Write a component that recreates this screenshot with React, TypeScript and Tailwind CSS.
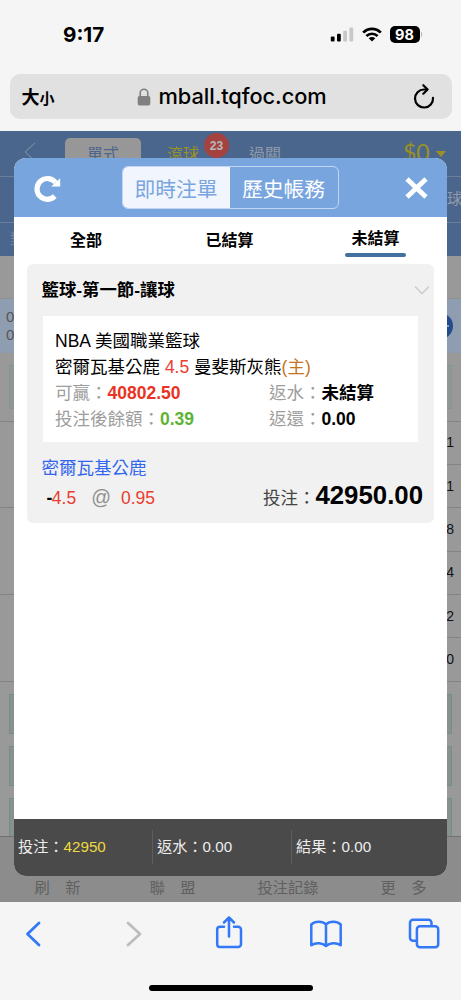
const records = [
  { value: "1" },
  { value: "1" },
  { value: "8" },
  { value: "4" },
  { value: "2" },
  { value: "0" },
];

function StatusBar() {
  return (
    <div className="flex h-[74px] items-start justify-between pt-[22px] pr-[39px] pl-[63px] font-['Inter']">
      <span className="text-[20.7px] leading-[25px] font-bold">9:17</span>
      <div className="flex h-[25px] items-center">
        <svg width="24" height="15" viewBox="0 0 24 15" className="mr-[8px]">
          <rect x="0.8" y="9.6" width="3.8" height="5" rx="1" fill="#000" />
          <rect x="7" y="6.8" width="3.8" height="7.8" rx="1" fill="#000" />
          <rect x="13.2" y="3.8" width="3.8" height="10.8" rx="1" fill="#c8c8c8" />
          <rect x="19.4" y="0.6" width="3.8" height="14" rx="1" fill="#c8c8c8" />
        </svg>
        <svg width="20" height="15" viewBox="0 0 20 15" fill="none" className="mr-[8px]">
          <path d="M1.2 5.6C6.2.6 13.8.6 18.8 5.6" stroke="#000" strokeWidth="2.7" />
          <path d="M4.4 9c3.2-3.1 8-3.1 11.2 0" stroke="#000" strokeWidth="2.6" />
          <path d="M6.7 11.3c1.9-1.7 4.7-1.7 6.6 0L10 14.6z" fill="#000" />
        </svg>
        <span className="flex h-[17px] w-[30px] items-center justify-center rounded-[5px] bg-black text-[14.5px] font-bold text-white">
          98
        </span>
        <span className="ml-[1px] h-[5px] w-[1.5px] rounded-r-full bg-[#b5b5b5]" />
      </div>
    </div>
  );
}

function AddressBar() {
  return (
    <div className="mx-[9.5px] flex h-[45px] items-center rounded-[10px] bg-[#e1e1e1] pr-[17px] pl-[12px]">
      <span className="w-[115px] font-['Noto_Sans_CJK_TC'] text-[18px] font-bold">
        大<span className="text-[15px]">小</span>
      </span>
      <svg width="14" height="18" viewBox="0 0 14 18" className="mr-[8px]" fill="none">
        <path d="M3.2 9V5a3.8 3.8 0 0 1 7.6 0v4" stroke="#808080" strokeWidth="1.6" />
        <rect x="0.7" y="8" width="12.6" height="9.6" rx="1.8" fill="#808080" />
      </svg>
      <span className="flex-1 font-['Inter'] text-[21.8px] font-medium tracking-[-0.05px]">mball.tqfoc.com</span>
      <svg width="22" height="26" viewBox="0 0 22 26" fill="none" stroke="#000" strokeWidth="2.2" strokeLinecap="round" strokeLinejoin="round" className="-mt-[2px]">
        <path d="M14 6.5H11A9 9 0 1 0 20 14.8" />
        <path d="M10.3 2.2 14.6 6.5l-4.3 4.2" />
      </svg>
    </div>
  );
}

function Backdrop() {
  return (
    <div className="flex h-full flex-col bg-[#999]">
      <div className="h-[125px] shrink-0 bg-[#4b668c]">
        <div className="flex h-[46px] border-b border-[#6a7f9c]">
          <svg width="12" height="20" viewBox="0 0 12 20" fill="none" className="mt-[11px] ml-[24px] shrink-0">
            <path d="M11 1 1 10l10 9" stroke="#8795a8" />
          </svg>
          <span className="mt-[7px] ml-[29px] h-[35px] w-[76px] shrink-0 rounded-[5px] bg-[#979797] text-center text-[16px] leading-[33px] text-[#4b668c]">
            單式
          </span>
          <span className="mt-[7px] ml-[26px] shrink-0 text-[16px] leading-[33px] text-[#999127]">滾球</span>
          <span className="mt-[2px] ml-[5px] flex h-[25px] w-[25px] shrink-0 items-center justify-center rounded-full bg-[#a4423f] text-[12px] font-bold text-[#b9b9b9]">
            23
          </span>
          <span className="mt-[7px] ml-[20px] shrink-0 text-[16px] leading-[33px] text-[#8e9aab]">過關</span>
          <span className="mt-[4px] ml-[122px] w-[28px] shrink-0 font-['Lato'] text-[23px] leading-[34px] text-[#999127]">$0</span>
          <span className="mt-[20px] ml-[5px] h-0 w-0 shrink-0 border-x-[5px] border-t-[6px] border-x-transparent border-t-[#999127]" />
        </div>
        <div className="flex h-[46px] items-center justify-end overflow-hidden border-b border-[#6a7f9c]">
          <span className="-mr-[1px] text-[15px] text-[#8e9aab]">球</span>
        </div>
        <div className="pt-[5px] pl-[10px] text-[15px] text-[#7587a1]">對</div>
      </div>
      <div className="h-[43px] shrink-0 border-b border-[#909090]" />
      <div className="flex h-[54px] shrink-0 justify-between bg-[#8e9db0]">
        <div className="pt-[9px] pl-[6px] text-[15px] leading-[17.5px] text-[#555]">
          <div>0</div>
          <div>0</div>
        </div>
        <div className="mt-[14px] mr-[8px] flex h-[26px] w-[26px] items-center justify-end rounded-full bg-[#244b8c] pr-[4px]">
          <span className="h-[2px] w-[6px] bg-[#8e9db0]" />
        </div>
      </div>
      <div className="h-[68.5px] shrink-0 border-b border-[#838383] px-[9px] pt-[12px]">
        <div className="h-[44px] border border-[#82988f] bg-[#919796]" />
      </div>
      {records.map((record, i) => (
        <div key={i} className="flex h-[43.4px] shrink-0 justify-between">
          <div className={i % 2 ? "flex-1 border-b border-[#838383]" : "flex-1"} />
          <div className="flex w-[30px] items-center justify-end border-b border-[#838383] pr-[7px] text-[14px] text-[#111]">
            {record.value}
          </div>
        </div>
      ))}
      <div className="flex h-[154.1px] shrink-0 flex-col gap-[12px] overflow-hidden px-[9px] pt-[12px]">
        <div className="h-[40px] shrink-0 border border-[#768d85] bg-[#87918e]" />
        <div className="h-[40px] shrink-0 border border-[#768d85] bg-[#87918e]" />
        <div className="h-[40px] shrink-0 border border-[#768d85] bg-[#87918e]" />
      </div>
      <div className="flex flex-1 items-end border-t border-[#707070] bg-[#8c8c8c] pb-[3px] text-[15.3px] leading-[22px] text-[#606060]">
        <span className="w-[115px] text-center whitespace-pre">刷　新</span>
        <span className="w-[115px] text-center whitespace-pre">聯　盟</span>
        <span className="w-[116px] text-center">投注記錄</span>
        <span className="w-[115px] text-center whitespace-pre">更　多</span>
      </div>
    </div>
  );
}

function BetCard() {
  return (
    <div className="mx-[13px] h-[259px] rounded-[6px] bg-[#f1f1f1] pt-[13px] pr-[4px] pl-[14.5px] text-[17.5px] leading-[26px]">
      <div className="flex items-center justify-between">
        <span className="text-[17.4px] font-bold">籃球-第一節-讓球</span>
        <svg width="16" height="10" viewBox="0 0 16 10" fill="none">
          <path d="m1 1.5 7 7 7-7" stroke="#cecece" strokeWidth="1.7" />
        </svg>
      </div>
      <div className="mt-[13px] ml-[1.5px] h-[126px] w-[375px] bg-white pt-[12px] pl-[12px]">
        <div>NBA 美國職業籃球</div>
        <div>
          密爾瓦基公鹿 <span className="text-[#ea3d2f]">4.5</span> 曼斐斯灰熊
          <span className="text-[#c47423]">(主)</span>
        </div>
        <div className="flex">
          <span className="w-[214px] text-[#9d9d9d]">
            可贏：<b className="text-[#ea3323]">40802.50</b>
          </span>
          <span className="text-[#9d9d9d]">
            返水：<b className="text-black">未結算</b>
          </span>
        </div>
        <div className="flex">
          <span className="w-[214px] text-[#9d9d9d]">
            投注後餘額：<b className="text-[#5eb336]">0.39</b>
          </span>
          <span className="text-[#9d9d9d]">
            返還：<b className="text-black">0.00</b>
          </span>
        </div>
      </div>
      <div className="mt-[13px] text-[#3266ee]">密爾瓦基公鹿</div>
      <div className="mt-[1px] flex items-baseline pr-[7px] pl-[5px] text-[#ea3d2f]">
        <b className="text-black">-</b>
        <span className="-ml-[0.5px]">4.5</span>
        <span className="ml-[15px] text-[19.5px] text-[#909090]">@</span>
        <span className="ml-[10px] flex-1">0.95</span>
        <span className="text-[#444]">投注：</span>
        <b className="text-[25.8px] text-black">42950.00</b>
      </div>
    </div>
  );
}

function BetModal() {
  return (
    <div className="absolute top-[27px] left-[14px] flex h-[718px] w-[433px] flex-col overflow-hidden rounded-[12px] bg-white">
      <div className="flex h-[59px] shrink-0 items-center justify-between bg-[#79a5df] pr-[19px] pl-[20px]">
        <svg width="28" height="28" viewBox="0 0 28 28" fill="none">
          <path d="M20.8 22.2A10.4 10.4 0 1 1 21.6 8.5" stroke="#fff" strokeWidth="5.2" />
          <path d="M26.2 4.3v8.2h-9z" fill="#fff" />
        </svg>
        <div className="-ml-[7px] flex h-[43px] w-[217px] overflow-hidden rounded-[6px] border border-[#c2d6f1] text-[20.8px] leading-[45px]">
          <span className="w-[107px] bg-[#f1f5fd] text-center text-[#79a5df]">即時注單</span>
          <span className="flex-1 text-center text-white">歷史帳務</span>
        </div>
        <svg width="23" height="22" viewBox="0 0 23 22">
          <path d="m2 2 19 18M21 2 2 20" stroke="#fff" strokeWidth="4.8" />
        </svg>
      </div>
      <div className="flex h-[47px] shrink-0 text-[16px] font-bold">
        <span className="w-[144px] shrink-0 text-center leading-[48px]">全部</span>
        <span className="w-[143px] shrink-0 text-center leading-[48px]">已結算</span>
        <div className="flex w-[149px] shrink-0 flex-col items-center">
          <span className="h-[36px] leading-[44px]">未結算</span>
          <span className="h-[4px] w-[61px] rounded-full bg-[#41729f]" />
        </div>
      </div>
      <BetCard />
      <div className="mt-auto flex h-[57px] shrink-0 bg-[#4a4a4a] pt-[11px] text-[15.2px] leading-[33px] text-[#ededed]">
        <span className="h-[34px] w-[139px] border-r border-[#5e5e5e] pl-[4px]">
          投注：<span className="text-[#eed940]">42950</span>
        </span>
        <span className="h-[34px] w-[139px] border-r border-[#5e5e5e] pl-[4px]">返水：0.00</span>
        <span className="pl-[4px]">結果：0.00</span>
      </div>
    </div>
  );
}

function Toolbar() {
  return (
    <div className="flex h-[98px] flex-col items-center bg-[#f5f5f5]">
      <div className="flex h-[63px] w-full items-center pl-[25px] text-[#3378f6]">
        <svg width="17" height="26" viewBox="0 0 17 26" fill="none" stroke="currentColor" strokeWidth="2.8" strokeLinecap="round" strokeLinejoin="round">
          <path d="M14 2 2.5 13 14 24" />
        </svg>
        <svg width="17" height="26" viewBox="0 0 17 26" fill="none" stroke="#bdbdbd" strokeWidth="2.8" strokeLinecap="round" strokeLinejoin="round" className="ml-[83px]">
          <path d="m3 2 12 11L3 24" />
        </svg>
        <svg width="28" height="34" viewBox="0 0 28 34" fill="none" stroke="currentColor" strokeWidth="2.5" strokeLinecap="round" strokeLinejoin="round" className="-mt-[3px] ml-[73px]">
          <path d="M9 11.7H5a2.8 2.8 0 0 0-2.8 2.8V29.2a2.8 2.8 0 0 0 2.8 2.8h18.2a2.8 2.8 0 0 0 2.8-2.8V14.5a2.8 2.8 0 0 0-2.8-2.8H19" />
          <path d="M14 21.5V2.5M9 7.500l5-5 5 5" />
        </svg>
        <svg width="34" height="28" viewBox="0 0 34 28" fill="none" stroke="currentColor" strokeWidth="2.5" strokeLinecap="round" strokeLinejoin="round" className="ml-[66px]">
          <path d="M17 4.5V26c-3.5-3.3-10-4-14.7-.8V4.5C6 .8 13.5.8 17 4.5c3.5-3.7 11-3.7 14.7 0V25.2C27 22 20.5 22.7 17 26" />
        </svg>
        <svg width="32" height="31" viewBox="0 0 32 31" fill="none" stroke="currentColor" strokeWidth="2.5" className="ml-[65px]">
          <path d="M8.7 22.8H5a3 3 0 0 1-3-3V4.7a3 3 0 0 1 3-3h15.5a3 3 0 0 1 3 3V8.5" />
          <rect x="8.9" y="8.3" width="21.3" height="21" rx="3" />
        </svg>
      </div>
      <div className="mt-[20px] h-[6px] w-[164px] rounded-full bg-black" />
    </div>
  );
}

export default function App() {
  return (
    <div className="flex h-[1000px] w-[461px] flex-col overflow-hidden bg-[#f5f5f5] font-['Liberation_Sans','Noto_Sans_CJK_TC',sans-serif] text-black">
      <StatusBar />
      <AddressBar />
      <div className="relative mt-[12px] h-[771px] shrink-0">
        <Backdrop />
        <BetModal />
      </div>
      <Toolbar />
    </div>
  );
}
